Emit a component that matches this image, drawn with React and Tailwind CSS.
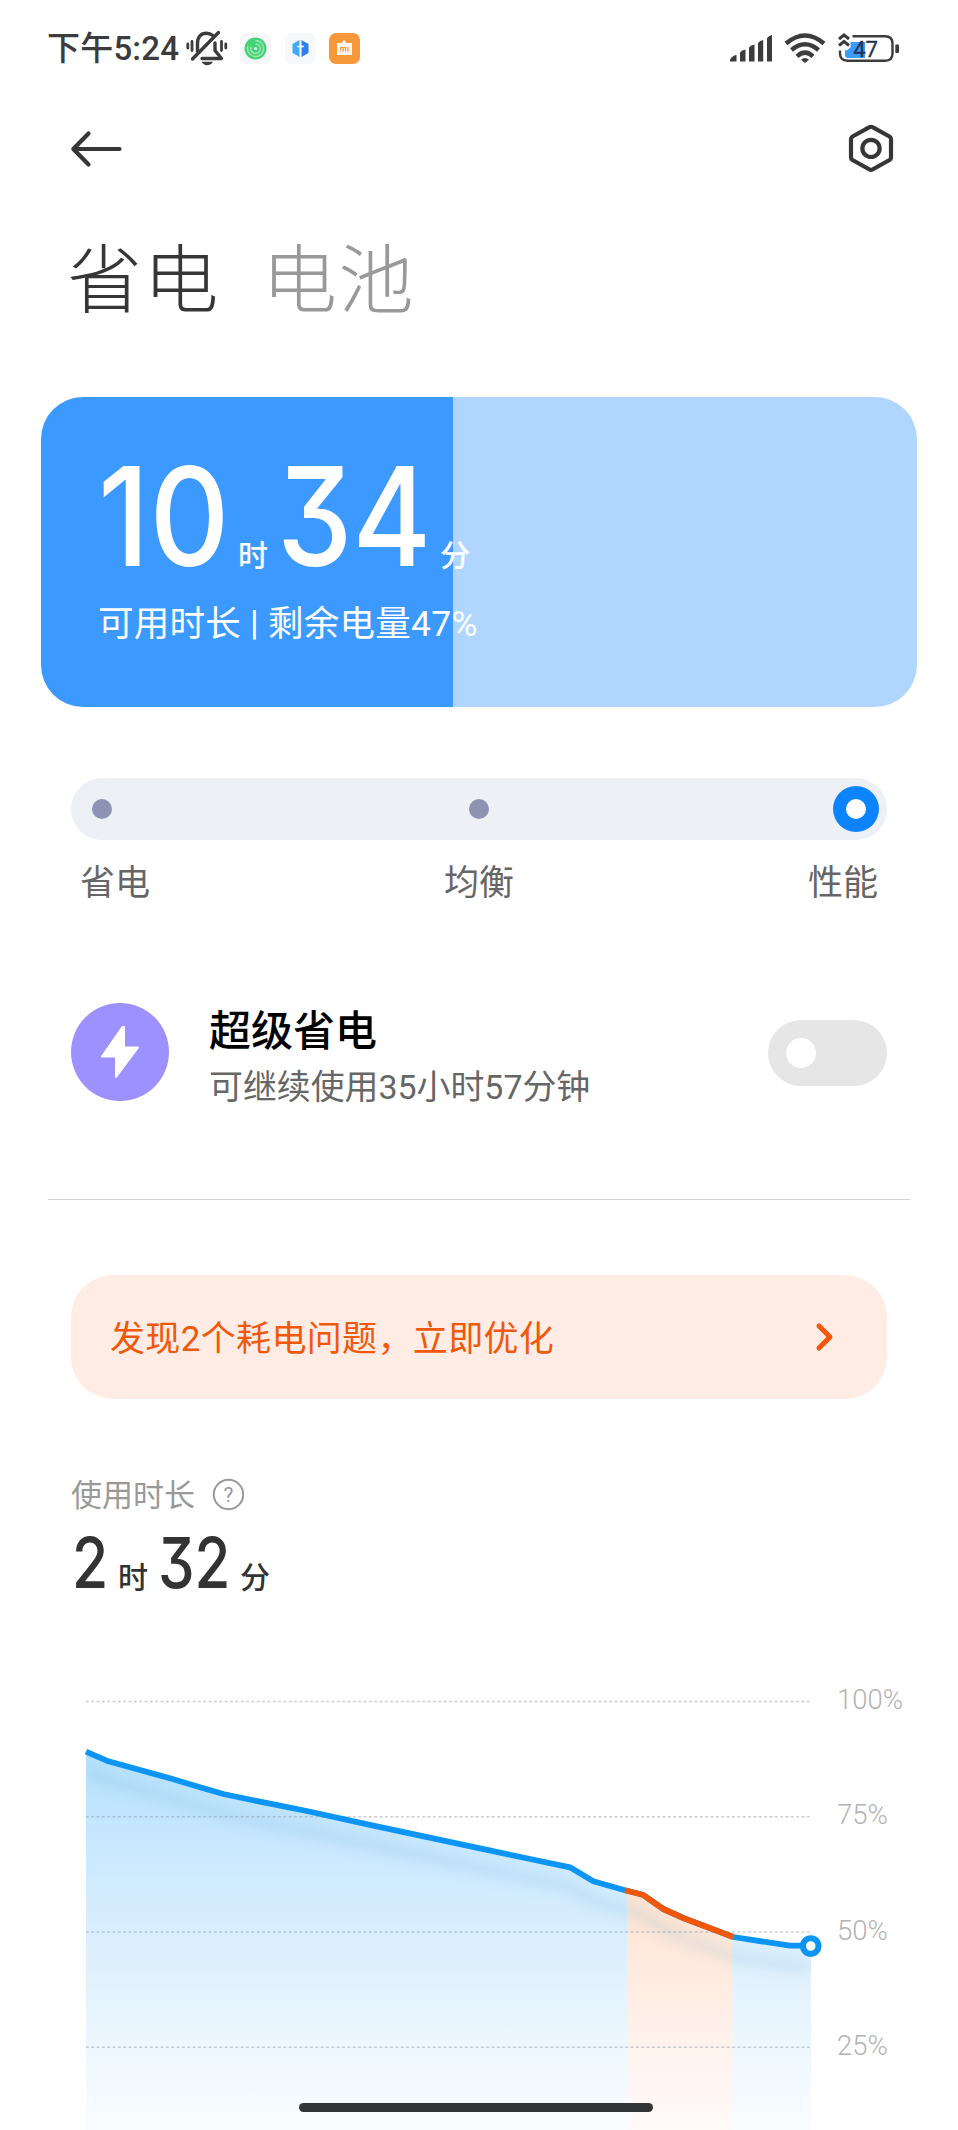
import React from "react";

const DARK = "#363636";

function StatusBar() {
  return (
    <header className="flex h-[96px] items-center pl-[47px] pr-[58px] text-[#3c3c3c]">
      <span className="mt-[2px] w-[137px] text-[33px] font-medium leading-[40px] tracking-[0.2px] whitespace-nowrap">下午5:24</span>
      <svg className="ml-[2px] h-[36px] w-[42px]" viewBox="0 0 42 36" fill="none" stroke="#3c3c3c" strokeWidth="3.4" strokeLinecap="round">
        <path d="M11.500 21V13.500C11.500 7 15 3.200 20.500 3.200C23 3.200 25 4 26.500 5.300" />
        <path d="M6.500 29L32.500 2.500" />
        <path d="M29 13V20.500L35.500 28.500H16" strokeLinejoin="round" />
        <path d="M1.800 14V18M6 11.500V20.500M35.500 11.500V20.500M39.800 14V18" strokeWidth="2.800" />
        <path d="M15.500 31.800H27Q25 35.200 21.200 35.200T15.500 31.800Z" fill="#3c3c3c" stroke="none" />
      </svg>
      <div className="ml-[12px] flex gap-[13.500px]">
        <svg className="size-[31px]" viewBox="0 0 31 31">
          <rect width="31" height="31" rx="7" fill="#f7f7f7" />
          <circle cx="15.500" cy="15.500" r="11" fill="#45d277" />
          <g fill="none" stroke="#a3ebbd" strokeWidth="1.300">
            <path d="M15.500 7.500A8 8 0 1 1 8 13" />
            <path d="M15.500 10.800A4.800 4.800 0 1 1 11 14" />
          </g>
          <circle cx="15.500" cy="15.500" r="1.600" fill="#e4fbec" />
        </svg>
        <svg className="size-[31px]" viewBox="0 0 31 31">
          <rect width="31" height="31" rx="7" fill="#f7f8fa" />
          <path d="M14.600 7L7.500 11V20L14.600 24Z" fill="#3fa9f8" />
          <path d="M16.400 7L23.500 11V20L16.400 24Z" fill="#2f7df0" />
          <path d="M15.500 8V23M12 13.500H19" stroke="#fff" strokeWidth="1.600" />
        </svg>
        <svg className="size-[31px]" viewBox="0 0 31 31">
          <rect width="31" height="31" rx="7" fill="#f7983a" />
          <path d="M8 10H13L14 7.500H16L17 10H23V22H8Z" fill="#fff5ea" />
          <path d="M11.800 18.500V14.500H16.500V18.500M14.200 15V18.500M19 14V18.500" fill="none" stroke="#f7983a" strokeWidth="1.200" />
        </svg>
      </div>
      <div className="ml-auto flex items-center">
        <svg className="h-[30px] w-[43px]" viewBox="0 0 43 30" fill="#3c3c3c">
          <path d="M0 28.500V26.500Q3 22 6.500 22V28.500Z" />
          <path d="M10 28.500V19.500Q12 17 15.500 16.500V28.500Z" />
          <path d="M19 28.500V14.500Q21 12 24.500 11.500V28.500Z" />
          <path d="M28 28.500V10Q30 7.500 33.200 7V28.500Z" />
          <path d="M37 28.500V5Q39 2.500 42 2V28.500Z" />
        </svg>
        <svg className="ml-[11px] h-[30px] w-[42px]" viewBox="0 0 42 30" fill="none" stroke="#3c3c3c" strokeWidth="4.400">
          <path d="M2 10.500Q21 -5.500 40 10.500" />
          <path d="M7.500 17Q21 5.500 34.500 17" />
          <path d="M13 23.300Q21 16 29 23.300" />
          <path d="M17 26.800Q21 23.200 25 26.800L21 30Z" fill="#3c3c3c" stroke="none" />
        </svg>
        <svg className="ml-[12px] h-[32px] w-[62px]" viewBox="0 0 62 32">
          <path d="M7 10H27V26H10Q7 26 7 23Z" fill="#3b99ff" />
          <path d="M14.500 4.300H47Q54.500 4.300 54.500 11.500V21.500Q54.500 28.700 47 28.700H9.500Q2 28.700 2 21.500V18.500" fill="none" stroke="#3c3c3c" strokeWidth="2.400" />
          <rect x="57.300" y="12.500" width="3.700" height="8.500" rx="1" fill="#3c3c3c" />
          <path d="M0 2H12.500V15.500L8.500 18.500L0 14.500Z" fill="#fff" />
          <path d="M1 7L6 3L11 7M1 13.500L6 9.500L11 13.500" fill="none" stroke="#3c3c3c" strokeWidth="3" />
          <text x="27.500" y="24.500" textAnchor="middle" fontSize="22" fontFamily="Roboto" fill="#223352" stroke="#223352" strokeWidth=".3">47</text>
        </svg>
      </div>
    </header>
  );
}

function TopBar() {
  return (
    <div className="flex h-[105px] items-center justify-between pl-[70px] pr-[63px]">
      <svg className="h-[40px] w-[54px]" viewBox="0 0 54 40" fill="none" stroke={DARK} strokeWidth="4.200" strokeLinecap="round" strokeLinejoin="round">
        <path d="M18.500 4.500L3.300 20L18.500 35.500M3.500 20H49.500" />
      </svg>
      <svg className="h-[52px] w-[48px]" viewBox="0 0 48 52" fill="none" stroke={DARK} strokeWidth="4.200" strokeLinejoin="round">
        <path d="M22.500 4.200Q24 3.300 25.500 4.200L42.500 13.500Q44 14.500 44 16V34.500Q44 36 42.500 37L25.500 46.500Q24 47.400 22.500 46.500L5.500 37Q4 36 4 34.500V16Q4 14.500 5.500 13.500Z" />
        <circle cx="24" cy="25.400" r="8.600" />
      </svg>
    </div>
  );
}

function Digits({ children, className, scale }) {
  return (
    <span className={`inline-block font-[Inter] font-medium [font-feature-settings:'cv09'] ${className}`}>
      <span className={`inline-block origin-left ${scale}`}>{children}</span>
    </span>
  );
}

function BatteryCard() {
  return (
    <section className="mx-[41px] mt-[63px] flex h-[310px] flex-col overflow-hidden rounded-[42px] bg-[linear-gradient(to_right,#3b99ff_412px,#b0d6ff_412px)] pl-[57px] text-white">
      <div className="mt-[48px] flex h-[142px] items-baseline whitespace-nowrap leading-[142px]">
        <Digits className="w-[135px] text-[137px]" scale="scale-x-[0.905]">10</Digits>
        <span className="ml-[5px] w-[39px] text-[30px] font-medium leading-none">时</span>
        <Digits className="w-[157px] text-[137px]" scale="scale-x-[0.875]">34</Digits>
        <span className="ml-[6px] text-[30px] font-medium leading-none">分</span>
      </div>
      <p className="mt-[11px] whitespace-nowrap text-[35.500px] leading-[52px] tracking-[0.25px]">
        可用时长 <span className="inline-block -translate-y-px">|</span> 剩余电量47%
      </p>
    </section>
  );
}

function ModeSlider() {
  return (
    <section className="mx-[71px] mt-[71px]">
      <div className="flex h-[62px] items-center justify-between rounded-full bg-[#edf1f6] pl-[21px] pr-[8px]">
        <span className="size-[20px] rounded-full bg-[#8c93b3]" />
        <span className="ml-[12px] size-[20px] rounded-full bg-[#8c93b3]" />
        <span className="flex size-[46px] items-center justify-center rounded-full bg-[#0d84ff]">
          <span className="size-[20px] rounded-full bg-white" />
        </span>
      </div>
      <div className="mt-[18px] flex justify-between px-[9px] text-[35px] leading-[52px] text-[#666]">
        <span>省电</span>
        <span>均衡</span>
        <span>性能</span>
      </div>
    </section>
  );
}

function SuperSaver() {
  return (
    <section className="mx-[48px] mt-[93px] flex h-[197px] items-start border-b-[1.500px] border-[#d2d2d2] pl-[23px] pr-[23px]">
      <span className="flex size-[98px] shrink-0 items-center justify-center rounded-full bg-[#9d91ff]">
        <svg className="h-[54px] w-[40px]" viewBox="0 0 40 54">
          <path d="M22.500 2L2 31.500H16V52L38 22.500H24V2Z" fill="#fff" stroke="#fff" strokeWidth="2" strokeLinejoin="round" />
        </svg>
      </span>
      <div className="ml-[40px] mt-[1px] whitespace-nowrap">
        <h2 className="text-[42px] font-medium leading-[56px] text-black">超级省电</h2>
        <p className="mt-[5px] text-[33.900px] leading-[46px] text-[#666]">可继续使用35小时57分钟</p>
      </div>
      <span className="ml-auto mt-[16.500px] flex h-[66px] w-[119px] items-center rounded-full bg-[#e6e6e6] pl-[18px]">
        <span className="size-[30px] rounded-full bg-white" />
      </span>
    </section>
  );
}

function IssueBanner() {
  return (
    <section className="mx-[71px] mt-[75px] flex h-[124px] items-center justify-between rounded-[42px] bg-[#ffede5] pl-[39px] pr-[52px] text-[#f0580c]">
      <span className="mt-[5px] whitespace-nowrap text-[35px] leading-[52px] tracking-[0.35px]">发现2个耗电问题，立即优化</span>
      <svg className="h-[30px] w-[20px]" viewBox="0 0 20 30" fill="none" stroke="#fa5607" strokeWidth="5" strokeLinecap="round" strokeLinejoin="round">
        <path d="M4 4L15 15L4 26" />
      </svg>
    </section>
  );
}

function UsageTime() {
  return (
    <section className="mt-[74px] pl-[71px]">
      <div className="flex h-[42px] items-center text-[31px] leading-[42px] text-[#999]">
        <span className="mt-[3px]">使用时长</span>
        <svg className="ml-[17px] size-[33px]" viewBox="0 0 33 33">
          <circle cx="16.500" cy="16.500" r="14.700" fill="none" stroke="#999" strokeWidth="2" />
          <text x="16.500" y="24" textAnchor="middle" fontSize="21" fontFamily="Roboto" fill="#999">?</text>
        </svg>
      </div>
      <div className="mt-[8px] flex h-[81px] items-baseline whitespace-nowrap pl-px leading-[80px] text-[#333]">
        <Digits className="w-[46px] text-[70px]" scale="scale-x-[0.84]">2</Digits>
        <span className="w-[40px] text-[30px] font-medium leading-none">时</span>
        <Digits className="w-[82px] text-[70px]" scale="scale-x-[0.83]">32</Digits>
        <span className="text-[30px] font-medium leading-none">分</span>
      </div>
    </section>
  );
}

const LINE = "M86 51.700L106.700 60.700L170 78.300L200 87.300L223.300 94L260 101.700L306.700 111L373.300 125.700L500 152.700L570 167.300L593.300 181.300L625 190.300L642.700 194.700L663.300 209L683.300 218L733.300 237L790 245.700H811";
const HOT = "M625 190.300L642.700 194.700L663.300 209L683.300 218L733.300 237";
const AREA = LINE + "V430H86Z";
const LEVELS = ["100%", "75%", "50%", "25%"];

function BatteryChart() {
  return (
    <section className="relative mt-[96px] flex h-[430px] w-full shrink-0">
      <svg className="h-[430px] w-[838px] shrink-0" viewBox="0 0 838 430" fill="none">
        <defs>
          <linearGradient id="cool" x1="0" y1="51" x2="0" y2="430" gradientUnits="userSpaceOnUse">
            <stop offset="0" stopColor="#b4e0fd" />
            <stop offset=".32" stopColor="#cfeaff" />
            <stop offset=".55" stopColor="#def0fd" />
            <stop offset=".78" stopColor="#edf7fe" />
            <stop offset="1" stopColor="#fafdff" />
          </linearGradient>
          <linearGradient id="warm" x1="0" y1="190" x2="0" y2="430" gradientUnits="userSpaceOnUse">
            <stop offset="0" stopColor="#fde3d0" />
            <stop offset=".6" stopColor="#fff1eb" />
            <stop offset="1" stopColor="#fffafa" />
          </linearGradient>
          <clipPath id="area"><path d={AREA} /></clipPath>
          <clipPath id="hot"><path d="M627 0H732.500V430H627Z" /></clipPath>
          <filter id="soft" x="-10%" y="-20%" width="120%" height="150%"><feGaussianBlur stdDeviation="6" /></filter>
        </defs>
        <path d={AREA} fill="url(#cool)" />
        <g clipPath="url(#hot)"><path d={AREA} fill="url(#warm)" /></g>
        <g clipPath="url(#area)">
          <path d={LINE} transform="translate(0 20)" stroke="#4b9fc8" strokeOpacity=".14" strokeWidth="12" filter="url(#soft)" />
        </g>
        <path d="M86 1.500H811M86 116.700H811M86 232H811M86 347.300H811" stroke="#8c9aa5" strokeOpacity=".5" strokeWidth="1.400" strokeDasharray="2.670 2.670" />
        <path d={LINE} stroke="#0c95f5" strokeWidth="5.800" strokeLinejoin="round" />
        <path d={HOT} stroke="#f25708" strokeWidth="5.800" strokeLinejoin="round" />
        <circle cx="810.700" cy="246" r="7.800" fill="#fff" stroke="#0c95f5" strokeWidth="6" />
      </svg>
      <div className="-ml-px -mt-[18px] flex flex-col text-[27.500px] leading-[36px] text-[#b3b3b3]">
        {LEVELS.map((level) => (
          <span key={level} className="h-[115.300px] shrink-0 font-light">{level}</span>
        ))}
      </div>
      <span className="absolute bottom-[18px] left-[299px] h-[9px] w-[354px] rounded-full bg-[#333436]" />
    </section>
  );
}

export default function App() {
  return (
    <main className="flex h-[2130px] w-[958px] flex-col overflow-hidden bg-white font-[Roboto,'Noto_Sans_CJK_SC',sans-serif]">
      <StatusBar />
      <TopBar />
      <h1 className="mt-[23px] flex h-[110px] items-center gap-[42px] pl-[67px] pt-[3px] text-[75px] font-light leading-[110px] tracking-[1.500px]">
        <span className="text-[#363636]">省电</span>
        <span className="text-[#999]">电池</span>
      </h1>
      <BatteryCard />
      <ModeSlider />
      <SuperSaver />
      <IssueBanner />
      <UsageTime />
      <BatteryChart />
    </main>
  );
}
